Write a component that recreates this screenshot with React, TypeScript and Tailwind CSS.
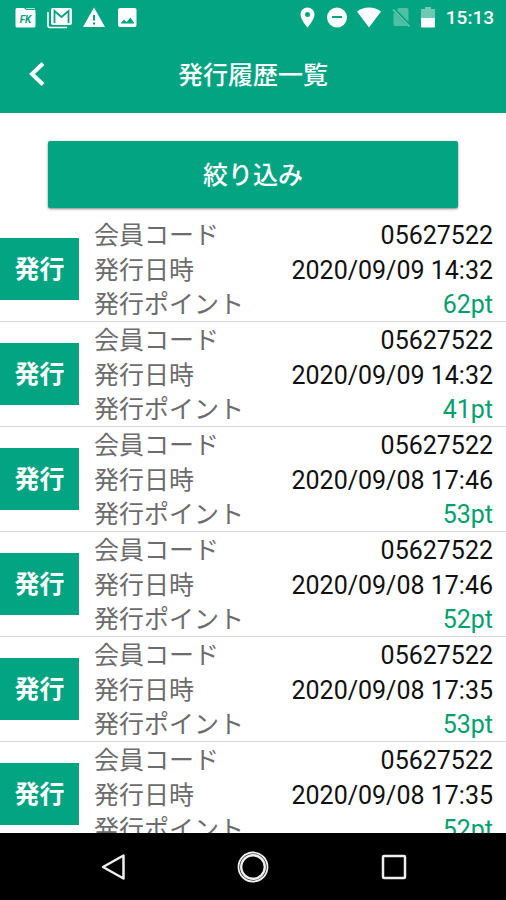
import { FunctionComponent } from 'react';

type History = {
    id: number;
    code: string;
    date: string;
    point: number;
};

const histories: History[] = [
    { id: 1, code: '05627522', date: '2020/09/09 14:32', point: 62 },
    { id: 2, code: '05627522', date: '2020/09/09 14:32', point: 41 },
    { id: 3, code: '05627522', date: '2020/09/08 17:46', point: 53 },
    { id: 4, code: '05627522', date: '2020/09/08 17:46', point: 52 },
    { id: 5, code: '05627522', date: '2020/09/08 17:35', point: 53 },
    { id: 6, code: '05627522', date: '2020/09/08 17:35', point: 52 },
];

const StatusBar: FunctionComponent = () => (
    <div className="flex h-9 items-center justify-between pl-[15px] pr-3 text-white">
        <div className="flex items-center gap-[11px]">
            <svg width="21" height="22" viewBox="0 0 21 22">
                <path
                    d="M2 1h7l2 2h8.500a1 1 0 0 1 1 1v15a1.500 1.500 0 0 1-1.500 1.500H2a1.500 1.500 0 0 1-1.500-1.500V2.500A1.500 1.500 0 0 1 2 1z"
                    fill="currentColor"
                />
                <path d="M11 1.500h9" stroke="#b5e2d8" />
                <text
                    x="10.500"
                    y="15.500"
                    textAnchor="middle"
                    fontSize="10"
                    fontWeight="700"
                    fontStyle="italic"
                    fill="#03a481"
                >
                    FK
                </text>
            </svg>
            <svg width="25" height="22" viewBox="0 0 25 22" fill="none">
                <path
                    d="M1 5v13.500a2 2 0 0 0 2 2h17"
                    stroke="currentColor"
                    strokeWidth="1.600"
                />
                <rect
                    x="4"
                    y="1"
                    width="21"
                    height="17"
                    rx="2"
                    fill="currentColor"
                />
                <path
                    d="M7.500 16V4l7 6 7-6v12"
                    stroke="#03a481"
                    strokeWidth="1.800"
                />
            </svg>
            <svg width="22" height="22" viewBox="0 0 22 22">
                <path d="M11 .5 22 20H0z" fill="currentColor" />
                <path d="M10 8h2v5.500h-2zM10 15.500h2v2h-2z" fill="#03a481" />
            </svg>
            <svg width="22" height="22" viewBox="0 0 22 22">
                <rect
                    x="2"
                    y="1"
                    width="18.500"
                    height="19"
                    rx="2"
                    fill="currentColor"
                />
                <path
                    d="m4.500 16.500 3.500-4 2.500 2.500 4-4.500 4 6z"
                    fill="#03a481"
                />
            </svg>
        </div>
        <div className="flex items-center gap-[9px]">
            <svg width="18" height="22" viewBox="0 0 18 22">
                <path
                    d="M7.500.5A7 7 0 0 0 .5 7.500c0 5 7 13 7 13s7-8 7-13a7 7 0 0 0-7-7zm0 9.500a2.500 2.500 0 1 1 0-5 2.500 2.500 0 0 1 0 5z"
                    fill="currentColor"
                />
            </svg>
            <svg width="21" height="22" viewBox="0 0 21 22">
                <circle cx="10" cy="10.500" r="10" fill="currentColor" />
                <path d="M5 10h10" stroke="#03a481" strokeWidth="2" />
            </svg>
            <svg width="26" height="22" viewBox="0 0 26 22">
                <path
                    d="M0 4.500C7-.9 17-.9 24 4.500L12 20.500z"
                    fill="currentColor"
                />
            </svg>
            <svg width="20" height="22" viewBox="0 0 20 22">
                <path
                    d="M7 1h8a1.500 1.500 0 0 1 1.500 1.500V15L4.500 2.800zM2.500 5.500 15.500 19H3a1.500 1.500 0 0 1-1.500-1.500V6.500z"
                    fill="#4fbfa6"
                />
                <path
                    d="M1 2.500 17.500 19.500"
                    stroke="#6fcab5"
                    strokeWidth="1.500"
                />
            </svg>
            <svg width="16" height="22" viewBox="0 0 16 22">
                <path d="M4 0h6v2h4v9H0V2h4z" fill="#6fcab5" />
                <path
                    d="M0 11h14v8.500a1 1 0 0 1-1 1H1a1 1 0 0 1-1-1z"
                    fill="currentColor"
                />
            </svg>
            <span className="text-[19px] font-medium leading-6">15:13</span>
        </div>
    </div>
);

const Header: FunctionComponent = () => (
    <header className="shrink-0 bg-[#03a481]">
        <StatusBar />
        <div className="grid h-[77px] grid-cols-[72px_1fr_72px] items-center text-white">
            <button
                type="button"
                aria-label="戻る"
                className="flex h-full items-center justify-center"
            >
                <svg width="20" height="28" viewBox="0 0 20 28" fill="none">
                    <path
                        d="M17 2.500 6 13l11 10.500"
                        stroke="currentColor"
                        strokeWidth="4"
                    />
                </svg>
            </button>
            <h1 className="pt-0.5 text-center text-[25px] font-medium leading-8">
                発行履歴一覧
            </h1>
        </div>
    </header>
);

const HistoryRow: FunctionComponent<{ history: History }> = ({ history }) => (
    <li className="flex items-center border-b border-[#d8d8d8]">
        <span className="flex h-[62px] w-[79px] shrink-0 items-center justify-center bg-[#03a481] pt-0.5 text-[25px] font-bold text-white">
            発行
        </span>
        <dl className="grid flex-1 grid-cols-[auto_1fr] grid-rows-[35px_34px_34px] items-start pl-[15px] pr-[13px] pt-px text-[25px] leading-9">
            <dt className="text-[#6c6c6c]">会員コード</dt>
            <dd className="text-right text-[#111111]">{history.code}</dd>
            <dt className="text-[#6c6c6c]">発行日時</dt>
            <dd className="text-right text-[#111111]">{history.date}</dd>
            <dt className="text-[#6c6c6c]">発行ポイント</dt>
            <dd className="text-right text-[#03a06f]">{history.point}pt</dd>
        </dl>
    </li>
);

const NavigationBar: FunctionComponent = () => (
    <nav className="grid h-[67px] shrink-0 grid-cols-[1fr_127px_127px_1fr] items-center bg-black text-[#eeeeee]">
        <button
            type="button"
            aria-label="戻る"
            className="col-span-1 flex justify-end"
        >
            <svg width="26" height="28" viewBox="0 0 26 28" fill="none">
                <path
                    d="M23.500 2.500v23L3 14z"
                    stroke="currentColor"
                    strokeWidth="2.500"
                    strokeLinejoin="round"
                />
            </svg>
        </button>
        <button
            type="button"
            aria-label="ホーム"
            className="col-span-2 flex justify-center"
        >
            <svg width="32" height="32" viewBox="0 0 32 32" fill="none">
                <circle
                    cx="16"
                    cy="16"
                    r="14.500"
                    stroke="currentColor"
                    strokeWidth="1.800"
                />
                <circle
                    cx="16"
                    cy="16"
                    r="11.800"
                    stroke="currentColor"
                    strokeWidth="2.400"
                />
            </svg>
        </button>
        <button
            type="button"
            aria-label="アプリ履歴"
            className="col-span-1 flex justify-start"
        >
            <svg width="28" height="26" viewBox="0 0 28 26" fill="none">
                <rect
                    x="3"
                    y="2"
                    width="22"
                    height="22"
                    rx="1"
                    stroke="currentColor"
                    strokeWidth="2.500"
                />
            </svg>
        </button>
    </nav>
);

const App: FunctionComponent = () => {
    return (
        <div className="flex h-screen flex-col bg-white font-['Roboto','Noto_Sans_CJK_JP',sans-serif]">
            <Header />
            <main className="min-h-0 flex-1 overflow-y-auto [scrollbar-width:none]">
                <div className="px-12 pb-[9px] pt-7">
                    <button
                        type="button"
                        className="h-[67px] w-full rounded-xs bg-[#03a481] pt-0.5 text-[25px] font-medium text-white shadow-sm shadow-black/40"
                    >
                        絞り込み
                    </button>
                </div>
                <ul>
                    {histories.map((history) => (
                        <HistoryRow key={history.id} history={history} />
                    ))}
                </ul>
            </main>
            <NavigationBar />
        </div>
    );
};

export default App;
